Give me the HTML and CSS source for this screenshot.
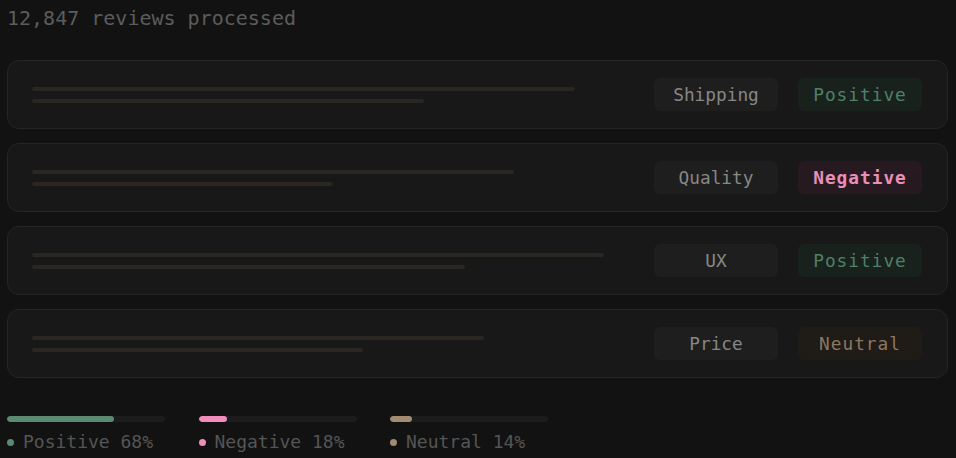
FILE: index.html
```html
<!DOCTYPE html>
<html>
<head>
<meta charset="utf-8">
<link rel="stylesheet" href="styles.css">
</head>
<body>
<div class="page">
  <div class="header">12,847 reviews processed</div>
  <div class="cards">
    <div class="card">
      <div class="lines">
        <div class="line" style="width:543px"></div>
        <div class="line" style="width:392px"></div>
      </div>
      <div class="badges">
        <span class="badge cat">Shipping</span>
        <span class="badge pos">Positive</span>
      </div>
    </div>
    <div class="card">
      <div class="lines">
        <div class="line" style="width:482px"></div>
        <div class="line" style="width:301px"></div>
      </div>
      <div class="badges">
        <span class="badge cat">Quality</span>
        <span class="badge neg">Negative</span>
      </div>
    </div>
    <div class="card">
      <div class="lines">
        <div class="line" style="width:572px"></div>
        <div class="line" style="width:433px"></div>
      </div>
      <div class="badges">
        <span class="badge cat">UX</span>
        <span class="badge pos">Positive</span>
      </div>
    </div>
    <div class="card">
      <div class="lines">
        <div class="line" style="width:452px"></div>
        <div class="line" style="width:331px"></div>
      </div>
      <div class="badges">
        <span class="badge cat">Price</span>
        <span class="badge neu">Neutral</span>
      </div>
    </div>
  </div>
  <div class="legend">
    <div class="item">
      <div class="track"><div class="fill pos-fill" style="width:68%"></div></div>
      <div class="label"><span class="dot pos-fill"></span>Positive 68%</div>
    </div>
    <div class="item">
      <div class="track"><div class="fill neg-fill" style="width:18%"></div></div>
      <div class="label"><span class="dot neg-fill"></span>Negative 18%</div>
    </div>
    <div class="item">
      <div class="track"><div class="fill neu-fill" style="width:14%"></div></div>
      <div class="label"><span class="dot neu-fill"></span>Neutral 14%</div>
    </div>
  </div>
</div>
</body>
</html>
```
FILE: styles.css
```css
html, body {
  margin: 0;
  padding: 0;
  background: #121212;
}
body {
  font-family: "DejaVu Sans Mono", "Liberation Mono", monospace;
  width: 956px;
  height: 458px;
  overflow: hidden;
}
.page {
  padding: 6px 8px 0 7px;
}
.header {
  font-size: 20px;
  line-height: 24px;
  color: #5c5c5c;
  height: 24px;
}
.cards {
  margin-top: 30px;
  display: flex;
  flex-direction: column;
  gap: 14px;
}
.card {
  height: 67px;
  border: 1px solid #252525;
  border-radius: 12px;
  background: #181818;
  display: flex;
  align-items: center;
  justify-content: space-between;
  padding: 0 25px 0 24px;
}
.lines {
  display: flex;
  flex-direction: column;
  gap: 8px;
}
.line {
  height: 4px;
  border-radius: 2px;
  background: #2a2621;
}
.badges {
  display: flex;
  gap: 20px;
}
.badge {
  width: 124px;
  height: 33px;
  border-radius: 6px;
  display: flex;
  align-items: center;
  justify-content: center;
  font-size: 17.8px;
}
.cat {
  background: #1e1e1e;
  color: #878787;
}
.pos {
  background: #18211c;
  color: #4f8068;
  letter-spacing: 1px;
}
.neg {
  background: #261a20;
  color: #e78fba;
  letter-spacing: 1px;
  font-weight: bold;
}
.neu {
  background: #1f1b17;
  color: #8c7661;
  letter-spacing: 1px;
}
.legend {
  margin-top: 38px;
  display: flex;
  gap: 33.5px;
}
.item {
  width: 158px;
}
.track {
  height: 6px;
  border-radius: 3px;
  background: #1c1c1c;
  overflow: hidden;
}
.fill {
  height: 100%;
  border-radius: 3px;
}
.pos-fill { background: #5b8a73; }
.neg-fill { background: #f08dbd; }
.neu-fill { background: #a18b72; }
.label {
  margin-top: 9px;
  display: flex;
  align-items: center;
  font-size: 18px;
  line-height: 22px;
  color: #555555;
  white-space: nowrap;
}
.dot {
  width: 7px;
  height: 7px;
  border-radius: 50%;
  margin-right: 9px;
  flex: none;
}
```
